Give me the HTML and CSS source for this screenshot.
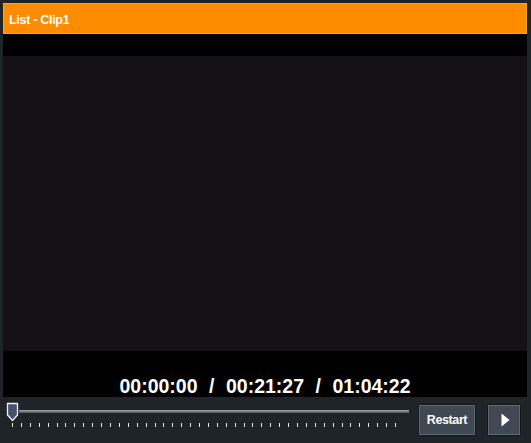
FILE: index.html
```html
<!DOCTYPE html>
<html>
<head>
<meta charset="utf-8">
<link rel="stylesheet" href="styles.css">
</head>
<body>
<div class="panel">
  <div class="header">List - Clip1</div>
  <div class="video">
    <div class="screen"></div>
    <div class="caption"><span>00:00:00</span><span class="sep">/</span><span>00:21:27</span><span class="sep">/</span><span>01:04:22</span></div>
  </div>
</div>
<div class="controls">
  <div class="slider">
    <div class="track-row">
      <div class="thumb">
        <svg width="13" height="20" viewBox="0 0 13 20"><path d="M1.5 1.5 H11.5 V13 L6.5 18.5 L1.5 13 Z" fill="#46506a" stroke="#f2f2f2" stroke-width="1.3" stroke-linejoin="round"/></svg>
      </div>
      <div class="track"></div>
    </div>
    <div class="ticks">
      <i></i><i></i><i></i><i></i><i></i><i></i><i></i><i></i><i></i><i></i><i></i>
      <i></i><i></i><i></i><i></i><i></i><i></i><i></i><i></i><i></i><i></i><i></i>
      <i></i><i></i><i></i><i></i><i></i><i></i><i></i><i></i><i></i><i></i><i></i>
      <i></i><i></i><i></i><i></i><i></i><i></i><i></i><i></i><i></i><i></i><i></i>
    </div>
  </div>
  <button class="btn restart">Restart</button>
  <button class="btn play"><svg width="9" height="14" viewBox="0 0 9 14"><path d="M0.5 0.5 L8.5 7 L0.5 13.5 Z" fill="#ffffff"/></svg></button>
</div>
</body>
</html>
```
FILE: styles.css
```css
html, body {
  margin: 0;
  padding: 0;
}
body {
  width: 531px;
  height: 443px;
  background: #1f2429;
  font-family: "Liberation Sans", Arial, sans-serif;
  overflow: hidden;
}
.panel {
  padding: 3px 4px 0 3px;
}
.header {
  background: #ff8c00;
  border: 1px solid #ffa51f;
  color: #ffffff;
  font-weight: bold;
  font-size: 12.5px;
  line-height: 12px;
  padding: 10px 0 0 5px;
  box-sizing: border-box;
  height: 31px;
  letter-spacing: -0.3px;
}
.video {
  background: #000000;
  padding-top: 22px;
}
.screen {
  height: 295px;
  background: #141114;
}
.caption {
  height: 46px;
  box-sizing: border-box;
  padding-top: 26px;
  text-align: center;
  color: #ffffff;
  font-weight: bold;
  font-size: 19.5px;
  line-height: 19px;
  white-space: nowrap;
}
.sep {
  margin: 0 11.5px;
}
.controls {
  height: 46px;
  display: flex;
  align-items: flex-start;
  padding: 0 10px 0 6px;
}
.slider {
  width: 403px;
  padding-top: 5px;
}
.track-row {
  display: flex;
  align-items: flex-start;
  height: 20px;
}
.thumb {
  width: 13px;
  height: 20px;
  flex: none;
}
.thumb svg {
  display: block;
}
.track {
  flex: 1;
  height: 3px;
  margin-top: 8px;
  background: linear-gradient(#9a9a9a 0, #9a9a9a 1px, #7c7c7c 1px, #7c7c7c 2px, #5a5e62 2px);
}
.ticks {
  display: flex;
  justify-content: space-between;
  width: 384px;
  margin-left: 6px;
  margin-top: 1px;
  height: 4px;
}
.ticks i {
  display: block;
  width: 1px;
  height: 4px;
  background: #e8e8e8;
}
.btn {
  margin-top: 7px;
  height: 32px;
  box-sizing: border-box;
  background: #3f4853;
  border: 1px solid #14181b;
  box-shadow: inset 0 0 0 1px #5e6771;
  color: #ffffff;
  font-family: "Liberation Sans", Arial, sans-serif;
  font-weight: bold;
  font-size: 12.5px;
  padding: 0;
  display: flex;
  align-items: center;
  justify-content: center;
  border-radius: 1px;
}
.restart {
  width: 58px;
  margin-left: 9px;
  letter-spacing: -0.4px;
}
.play {
  width: 34px;
  margin-left: 11px;
}
.play svg {
  display: block;
  margin-left: 2px;
}
```
